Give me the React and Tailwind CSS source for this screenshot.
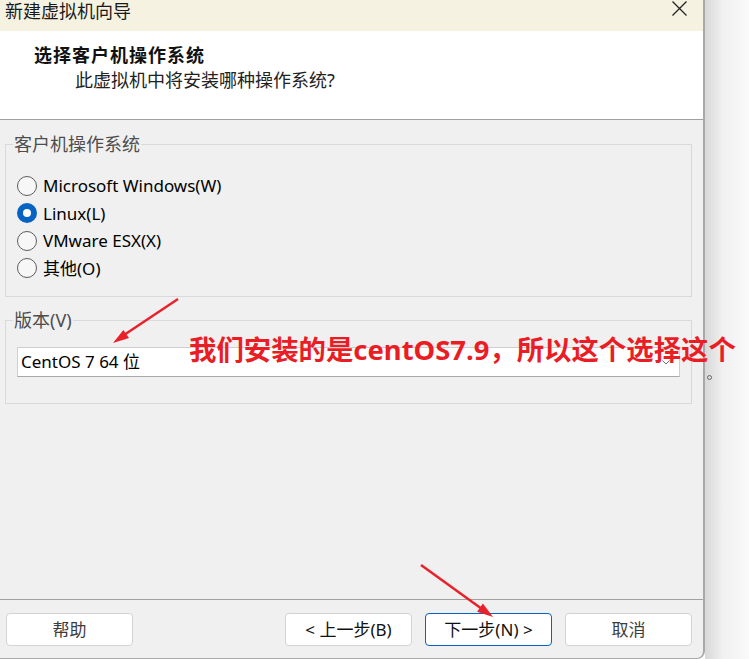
import React from 'react';

const font = { fontFamily: '"Noto Sans", "Noto Sans CJK SC", sans-serif' };

const systems = [
  { label: 'Microsoft Windows(W)', checked: false },
  { label: 'Linux(L)', checked: true },
  { label: 'VMware ESX(X)', checked: false },
  { label: '其他(O)', checked: false },
];

const Radio = ({ checked }) =>
  checked ? (
    <span className="w-[20px] h-[20px] rounded-full bg-[#0563c1] flex items-center justify-center shrink-0">
      <span className="w-[8px] h-[8px] rounded-full bg-white" />
    </span>
  ) : (
    <span className="w-[20px] h-[20px] rounded-full border border-[#5c5c5c] bg-[#f7f7f7] shrink-0" />
  );

const Button = ({ children, focused, muted }) => (
  <button
    className={`w-[127px] h-[33px] rounded-[4px] bg-white text-[17px] ${
      focused ? 'border border-[#0563c1]' : 'border border-[#d3d3d3]'
    } ${muted ? 'text-[#3c3c3c]' : 'text-[#111]'}`}
  >
    {children}
  </button>
);

const App = () => {
  return (
    <div className="relative w-[749px] h-[659px] flex overflow-hidden bg-white" style={font}>
      <div className="w-[705px] h-[659px] flex flex-col bg-[#f0f0f0] border-r-2 border-b border-[#a8a8a8] rounded-br-[8px] overflow-hidden">
        {/* title bar */}
        <div className="h-[31px] bg-[#f5f2e2] flex justify-between items-start pl-[5px] pr-[16px]">
          <span className="pt-[1px] text-[18px] leading-[20px] text-[#1a1a1a]">新建虚拟机向导</span>
          <svg width="15" height="15" viewBox="0 0 15 15" className="mt-[1px]">
            <path d="M0.5 0.5 L14.5 14.5 M14.5 0.5 L0.5 14.5" stroke="#222" strokeWidth="1.3" fill="none" />
          </svg>
        </div>

        {/* header */}
        <div className="h-[89px] bg-white border-b border-[#a0a0a0] pt-[12px]">
          <div className="pl-[34px] text-[18px] leading-[24px] font-bold tracking-[1px] text-[#111]">
            选择客户机操作系统
          </div>
          <div className="pl-[75px] mt-[2px] text-[18px] leading-[22px] text-[#222]">
            此虚拟机中将安装哪种操作系统?
          </div>
        </div>

        {/* body */}
        <div className="flex-1 pt-[16px] pl-[5px]">
          <fieldset className="w-[687px] border border-[#d9d9d9] px-[7px] pt-[19px] pb-[14px]">
            <legend className="text-[18px] leading-[17px] text-[#4d4d4d] px-[1px]">客户机操作系统</legend>
            <div className="flex flex-col pl-[4px]">
              {systems.map((s) => (
                <label key={s.label} className="h-[27.5px] flex items-center gap-[6px] text-[17px] text-black">
                  <Radio checked={s.checked} />
                  <span>{s.label}</span>
                </label>
              ))}
            </div>
          </fieldset>

          <fieldset className="w-[687px] mt-[15px] border border-[#d9d9d9] px-[7px] pt-[18px] pb-[26px]">
            <legend className="text-[18px] leading-[17px] text-[#4d4d4d] px-[1px]">版本(V)</legend>
            <div className="ml-[4px] w-[663px] h-[30px] bg-white border border-[#cfcfcf] border-b-[#a9a9a9] flex items-center justify-between pl-[3px] pr-[9px]">
              <span className="text-[17px] text-black">CentOS 7 64 位</span>
              <svg width="8" height="5" viewBox="0 0 8 5">
                <path d="M0.5 0.5 L4 4 L7.5 0.5" stroke="#777" strokeWidth="1" fill="none" />
              </svg>
            </div>
          </fieldset>
        </div>

        {/* footer */}
        <div className="border-t border-[#a0a0a0] pt-[13px] pb-[12px] pl-[6px] pr-[11px] flex">
          <Button muted>帮助</Button>
          <div className="ml-auto flex gap-[13px]">
            <Button>&lt; 上一步(B)</Button>
            <Button focused>下一步(N) &gt;</Button>
            <Button muted>取消</Button>
          </div>
        </div>
      </div>

      {/* backdrop strip */}
      <div className="flex-1 bg-linear-to-r from-[#d8d8d8] via-[#f0f0f0] via-40% to-[#fafafa] pt-[375px] pl-[2px]">
        <span className="block w-[5px] h-[5px] rounded-full border border-[#666]" />
      </div>

      {/* annotation */}
      <div className="absolute left-[189px] top-[336px] text-[27.4px] leading-[28px] font-bold text-[#ea1d25] whitespace-nowrap">
        我们安装的是centOS7.9，所以这个选择这个
      </div>
      <svg className="absolute inset-0 pointer-events-none" width="749" height="659">
        <line x1="178" y1="299" x2="124" y2="335" stroke="#e8212a" strokeWidth="2.5" />
        <polygon points="113,343 129,338.1 123.4,329.9" fill="#e8212a" />
        <line x1="421" y1="565" x2="482" y2="609" stroke="#e8212a" strokeWidth="2.5" />
        <polygon points="493,617 477.1,611.7 482.9,603.6" fill="#e8212a" />
      </svg>
    </div>
  );
};

export default App;
